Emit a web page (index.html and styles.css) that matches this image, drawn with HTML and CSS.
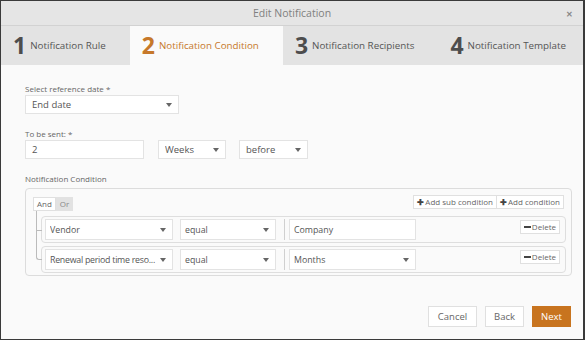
FILE: index.html
```html
<!DOCTYPE html>
<html lang="en">
<head>
  <meta charset="UTF-8" />
  <title>Edit Notification</title>
  <link rel="stylesheet" href="styles.css">
</head>
<body>

  <div class="modal">
    <div class="modal-header">
      <span></span>
      <span class="modal-title">Edit Notification</span>
      <span class="modal-close">✕</span>
    </div>

    <div class="steps">
      <div class="step"><span class="step-num">1</span><span class="step-label">Notification Rule</span></div>
      <div class="step active"><span class="step-num">2</span><span class="step-label">Notification Condition</span></div>
      <div class="step"><span class="step-num">3</span><span class="step-label">Notification Recipients</span></div>
      <div class="step"><span class="step-num">4</span><span class="step-label">Notification Template</span></div>
    </div>

    <div class="modal-body">
      <label class="field-label">Select reference date *</label>
      <div class="select w-ref"><span>End date</span><i class="caret"></i></div>

      <label class="field-label gap-top">To be sent: *</label>
      <div class="sent-row">
        <div class="input w-num">2</div>
        <div class="select w-unit"><span>Weeks</span><i class="caret"></i></div>
        <div class="select w-when"><span>before</span><i class="caret"></i></div>
      </div>

      <label class="field-label gap-top2">Notification Condition</label>
      <div class="group">
        <div class="group-head">
          <div class="andor">
            <span class="andor-btn">And</span><span class="andor-btn">Or</span>
          </div>
          <div class="group-actions">
            <span class="small-btn"><b class="plus">✚</b>Add sub condition</span><span class="small-btn"><b class="plus">✚</b>Add condition</span>
          </div>
        </div>

        <div class="rules">
          <div class="rule">
            <div class="select rs w-field"><span>Vendor</span><i class="caret"></i></div>
            <div class="select rs w-op"><span>equal</span><i class="caret"></i></div>
            <div class="sep"></div>
            <div class="input rs w-val">Company</div>
            <span class="small-btn del"><b class="minus"></b>Delete</span>
          </div>
          <div class="rule">
            <div class="select rs w-field"><span class="tight">Renewal period time reso...</span><i class="caret"></i></div>
            <div class="select rs w-op"><span>equal</span><i class="caret"></i></div>
            <div class="sep"></div>
            <div class="select rs w-val"><span>Months</span><i class="caret"></i></div>
            <span class="small-btn del"><b class="minus"></b>Delete</span>
          </div>
        </div>
      </div>
    </div>

    <div class="modal-footer">
      <button class="btn w-cancel">Cancel</button>
      <button class="btn w-back">Back</button>
      <button class="btn primary w-next">Next</button>
    </div>
  </div>

</body>
</html>
```

FILE: styles.css
```css
* {
  margin: 0;
  padding: 0;
  box-sizing: border-box;
}

body {
  background: #3a3a3a;
  font-family: 'Open Sans', 'Liberation Sans', sans-serif;
  color: #555;
  width: 585px;
  height: 340px;
  overflow: hidden;
}

.modal {
  width: 582px;
  height: 338px;
  margin: 1px 2px 1px 1px;
  background: #fafafa;
  display: flex;
  flex-direction: column;
}

.modal-header {
  height: 25px;
  background: #e5e5e5;
  border-bottom: 1px solid #d2d2d2;
  display: grid;
  grid-template-columns: 1fr auto 1fr;
  align-items: center;
}

.modal-title {
  font-size: 10.5px;
  color: #808080;
}

.modal-close {
  justify-self: end;
  margin-right: 10px;
  font-size: 8px;
  font-weight: bold;
  color: #888;
}

.steps {
  height: 39px;
  background: #e3e3e3;
  display: flex;
  white-space: nowrap;
}

.step {
  display: flex;
  align-items: center;
  padding: 0 24px 0 12px;
}

.step.active {
  background: #fafafa;
}

.step-num {
  font-size: 23px;
  font-weight: bold;
  color: #4d4d4d;
  margin-right: 4px;
  line-height: 1;
}

.step-label {
  font-size: 9.8px;
  color: #555;
}

.step.active .step-num,
.step.active .step-label {
  color: #c6782a;
}

.modal-body {
  padding: 18px 11px 0 24px;
}

.field-label {
  display: block;
  font-size: 8px;
  line-height: 11px;
  color: #666;
  margin-bottom: 1px;
}

.gap-top {
  margin-top: 14px;
}

.gap-top2 {
  margin-top: 14px;
  margin-bottom: 4px;
}

.select,
.input {
  height: 19px;
  background: #fff;
  border: 1px solid #e3e3e3;
  font-size: 9.5px;
  color: #555;
  display: flex;
  align-items: center;
  padding: 0 6px;
  white-space: nowrap;
}

.select span {
  flex: 1;
  overflow: hidden;
}

.select span.tight {
  letter-spacing: -0.25px;
}

.caret {
  width: 0;
  height: 0;
  border-left: 3px solid transparent;
  border-right: 3px solid transparent;
  border-top: 4px solid #666;
  margin-left: 4px;
  flex-shrink: 0;
}

.w-ref { width: 154px; }
.w-num { width: 119px; }
.w-unit { width: 68px; margin-left: 14px; }
.w-when { width: 69px; margin-left: 13px; }

.sent-row {
  display: flex;
}

.group {
  border: 1px solid #dcdcdc;
  border-radius: 4px;
  padding: 6px 5px 3px 7px;
  height: 88px;
}

.group-head {
  display: flex;
  justify-content: space-between;
}

.andor {
  margin-top: 2px;
  display: flex;
  height: 14px;
}

.andor-btn {
  font-size: 8px;
  line-height: 12px;
  padding: 0 3px;
  border: 1px solid #e0e0e0;
  background: #fff;
  color: #666;
}

.andor-btn + .andor-btn {
  background: #e2e2e2;
  border-color: #e2e2e2;
  color: #888;
}

.group-actions {
  display: flex;
  margin-right: 2px;
}

.small-btn {
  font-size: 8px;
  line-height: 12px;
  height: 14px;
  padding: 0 3px;
  border: 1px solid #e0e0e0;
  background: #fff;
  color: #666;
  display: flex;
  align-items: center;
  white-space: nowrap;
}

.small-btn + .small-btn {
  border-left: none;
}

.plus {
  font-size: 7.5px;
  color: #444;
  margin-right: 1px;
}

.minus {
  width: 7px;
  height: 2px;
  background: #444;
  margin-right: 1px;
}

.rules {
  margin: 5px 0 0 8px;
}

.rule {
  position: relative;
  display: flex;
  align-items: center;
  height: 27px;
  border: 1px solid #dedede;
  border-radius: 4px;
  padding: 0 3px;
  margin-bottom: 3px;
}

.rule::before {
  content: "";
  position: absolute;
  left: -6px;
  top: -6px;
  width: 5px;
  height: 19px;
  border-left: 1px solid #bbb;
  border-bottom: 1px solid #bbb;
}

.rule + .rule::before {
  top: -18px;
  height: 30px;
  border-bottom-left-radius: 3px;
}

.rs {
  height: 21px;
  font-size: 8.8px;
  padding: 0 6px 0 4px;
}

.w-field { width: 128px; }
.w-op { width: 96px; margin-left: 7px; }
.w-val { width: 127px; }

.sep {
  width: 1px;
  height: 21px;
  background: #d0d0d0;
  margin: 0 4px 0 8px;
}

.del {
  margin-left: auto;
  margin-right: 2px;
  align-self: flex-start;
  margin-top: 3px;
}

.modal-footer {
  margin-top: auto;
  padding: 0 12px 12px 0;
  display: flex;
  justify-content: flex-end;
  gap: 8px;
}

.btn {
  height: 21px;
  font-family: inherit;
  font-size: 9.5px;
  color: #666;
  background: #fff;
  border: 1px solid #e0e0e0;
}

.btn.primary {
  background: #c8741f;
  border-color: #c8741f;
  color: #fff;
}

.w-cancel { width: 49px; }
.w-back { width: 39px; }
.w-next { width: 39px; }
```
